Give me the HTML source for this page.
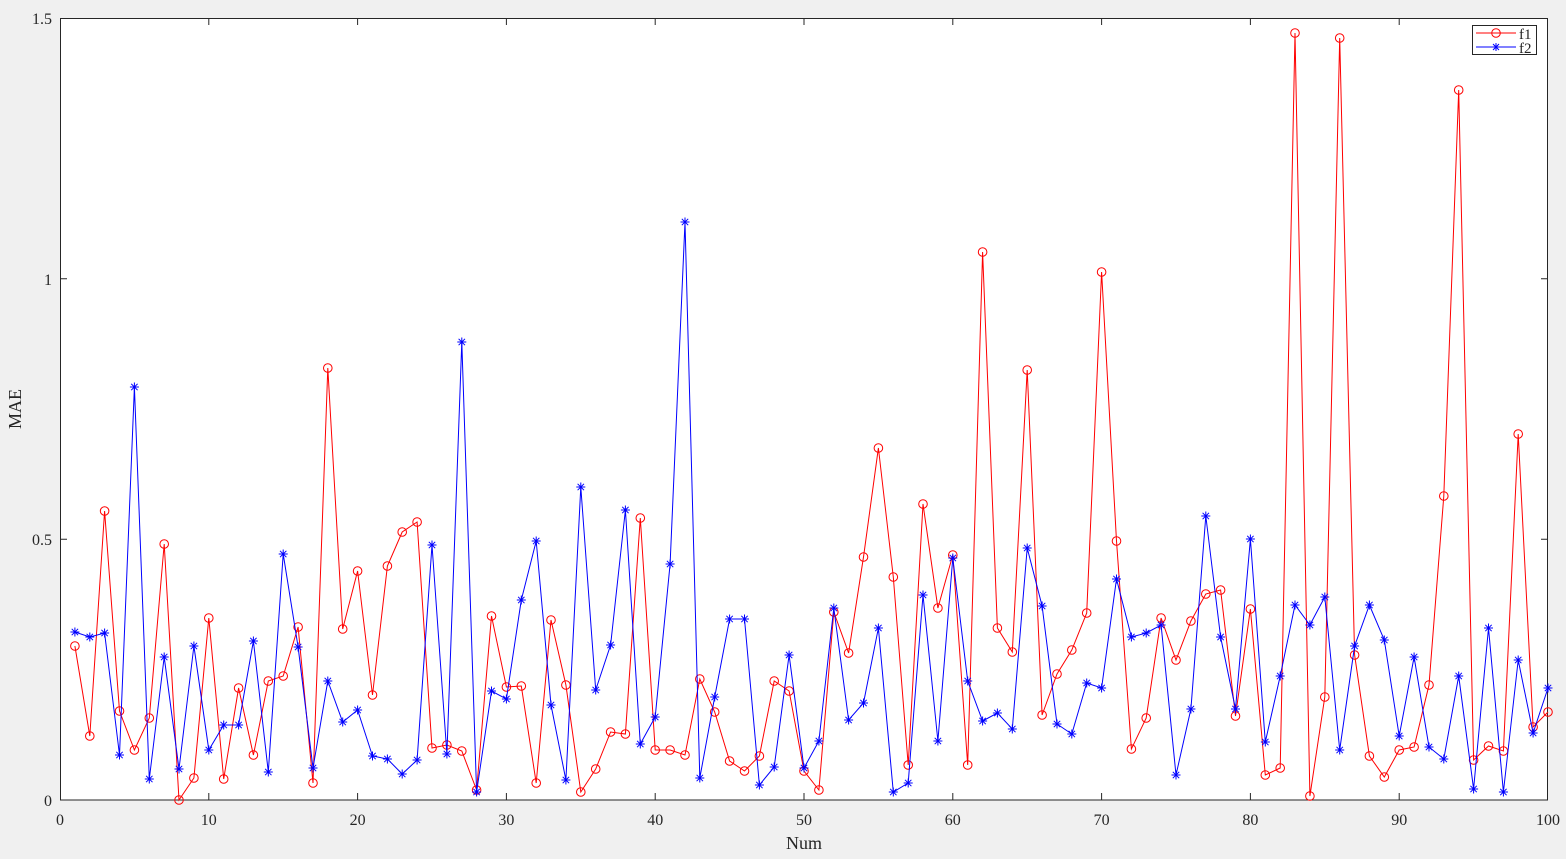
<!DOCTYPE html>
<html><head><meta charset="utf-8"><style>
html,body{margin:0;padding:0;background:#f0f0f0;}
svg{display:block;}
text{font-family:"Liberation Serif",serif;font-size:16px;fill:#262626;}
</style></head><body>
<svg width="1566" height="859" viewBox="0 0 1566 859" xmlns="http://www.w3.org/2000/svg">
<defs>
<marker id="mc" markerWidth="12" markerHeight="12" refX="6" refY="6" markerUnits="userSpaceOnUse"><circle cx="6" cy="6" r="4.3" fill="none" stroke="#ff0000" stroke-width="1"/></marker>
<marker id="ms" markerWidth="12" markerHeight="12" refX="6" refY="6" markerUnits="userSpaceOnUse"><path d="M1.5 6H10.5M6 1.5V10.5M2.8 2.8L9.2 9.2M9.2 2.8L2.8 9.2" stroke="#0000ff" stroke-width="1"/></marker>
</defs>
<rect x="60" y="18" width="1488" height="782" fill="#fff"/>
<g stroke="#262626" stroke-width="1">
<path d="M208.8 800v-7M357.6 800v-7M506.4 800v-7M655.2 800v-7M804 800v-7M952.8 800v-7M1101.6 800v-7M1250.4 800v-7M1399.2 800v-7M208.8 18v7M357.6 18v7M506.4 18v7M655.2 18v7M804 18v7M952.8 18v7M1101.6 18v7M1250.4 18v7M1399.2 18v7"/>
<path d="M60 539.3h7M60 278.7h7M1548 539.3h-7M1548 278.7h-7"/>
<rect x="60.5" y="18.5" width="1487" height="781.5" fill="none"/>
</g>
<polyline fill="none" stroke="#ff0000" stroke-width="1" marker-start="url(#mc)" marker-mid="url(#mc)" marker-end="url(#mc)" points="74.9,646 89.8,736 104.6,511 119.5,711 134.4,750 149.3,718 164.2,544 179,800 193.9,778 208.8,618 223.7,779 238.6,688 253.4,755 268.3,681 283.2,676 298.1,627 313,783 327.8,368 342.7,629 357.6,571 372.5,695 387.4,566 402.2,532 417.1,522 432,748 446.9,745 461.8,751 476.6,790 491.5,616 506.4,687 521.3,686 536.2,783 551,620 565.9,685 580.8,792 595.7,769 610.6,732 625.4,734 640.3,518 655.2,750 670.1,750 685,755 699.8,679 714.7,712 729.6,761 744.5,771 759.4,756 774.2,681 789.1,691 804,771 818.9,790 833.8,612 848.6,653 863.5,557 878.4,448 893.3,577 908.2,765 923,504 937.9,608 952.8,555 967.7,765 982.6,252 997.4,628 1012.3,652 1027.2,370 1042.1,715 1057,674 1071.8,650 1086.7,613 1101.6,272 1116.5,541 1131.4,749 1146.2,718 1161.1,618 1176,660 1190.9,621 1205.8,594 1220.6,590 1235.5,716 1250.4,609 1265.3,775 1280.2,768 1295,33 1309.9,796 1324.8,697 1339.7,38 1354.6,655 1369.4,756 1384.3,777 1399.2,750 1414.1,747 1429,685 1443.8,496 1458.7,90 1473.6,760 1488.5,746 1503.4,751 1518.2,434 1533.1,727 1548,712"/>
<polyline fill="none" stroke="#0000ff" stroke-width="1" marker-start="url(#ms)" marker-mid="url(#ms)" marker-end="url(#ms)" points="74.9,632 89.8,637 104.6,633 119.5,755 134.4,387 149.3,779 164.2,657 179,769 193.9,646 208.8,750 223.7,725 238.6,725 253.4,641 268.3,772 283.2,554 298.1,647 313,768 327.8,681 342.7,722 357.6,710 372.5,756 387.4,759 402.2,774 417.1,760 432,545 446.9,754 461.8,342 476.6,792 491.5,691 506.4,699 521.3,600 536.2,541 551,705 565.9,780 580.8,487 595.7,690 610.6,645 625.4,510 640.3,744 655.2,717 670.1,564 685,222 699.8,778 714.7,697 729.6,619 744.5,619 759.4,785 774.2,767 789.1,655 804,768 818.9,741 833.8,608 848.6,720 863.5,703 878.4,628 893.3,792 908.2,783 923,595 937.9,741 952.8,558 967.7,681 982.6,721 997.4,713 1012.3,729 1027.2,548 1042.1,606 1057,724 1071.8,734 1086.7,683 1101.6,688 1116.5,579 1131.4,637 1146.2,633 1161.1,625 1176,775 1190.9,709 1205.8,516 1220.6,637 1235.5,709 1250.4,539 1265.3,742 1280.2,676 1295,605 1309.9,625 1324.8,597 1339.7,750 1354.6,646 1369.4,605 1384.3,640 1399.2,736 1414.1,657 1429,747 1443.8,759 1458.7,676 1473.6,789 1488.5,628 1503.4,792 1518.2,660 1533.1,733 1548,688"/>
<rect x="1472.5" y="25.5" width="64" height="29" fill="#fff" stroke="#262626" stroke-width="1"/>
<line x1="1476" y1="33" x2="1516" y2="33" stroke="#ff0000"/>
<circle cx="1496" cy="33" r="4.3" fill="none" stroke="#ff0000"/>
<line x1="1476" y1="47" x2="1516" y2="47" stroke="#0000ff"/>
<path d="M1492 47h8M1496 43v8M1493 44l6 6M1499 44l-6 6" stroke="#0000ff"/>
<text x="1519" y="39" style="font-size:15px">f1</text>
<text x="1519" y="53" style="font-size:15px">f2</text>
<g text-anchor="middle">
<text x="60" y="825">0</text><text x="208.8" y="825">10</text><text x="357.6" y="825">20</text><text x="506.4" y="825">30</text><text x="655.2" y="825">40</text><text x="804" y="825">50</text><text x="952.8" y="825">60</text><text x="1101.6" y="825">70</text><text x="1250.4" y="825">80</text><text x="1399.2" y="825">90</text><text x="1548" y="825">100</text>
<text x="804" y="849" style="font-size:18px">Num</text>
<text x="0" y="0" transform="translate(21,409) rotate(-90)" style="font-size:18px">MAE</text>
</g>
<g text-anchor="end">
<text x="52" y="806">0</text><text x="52" y="545">0.5</text><text x="52" y="285">1</text><text x="52" y="24">1.5</text>
</g>
</svg>
</body></html>
